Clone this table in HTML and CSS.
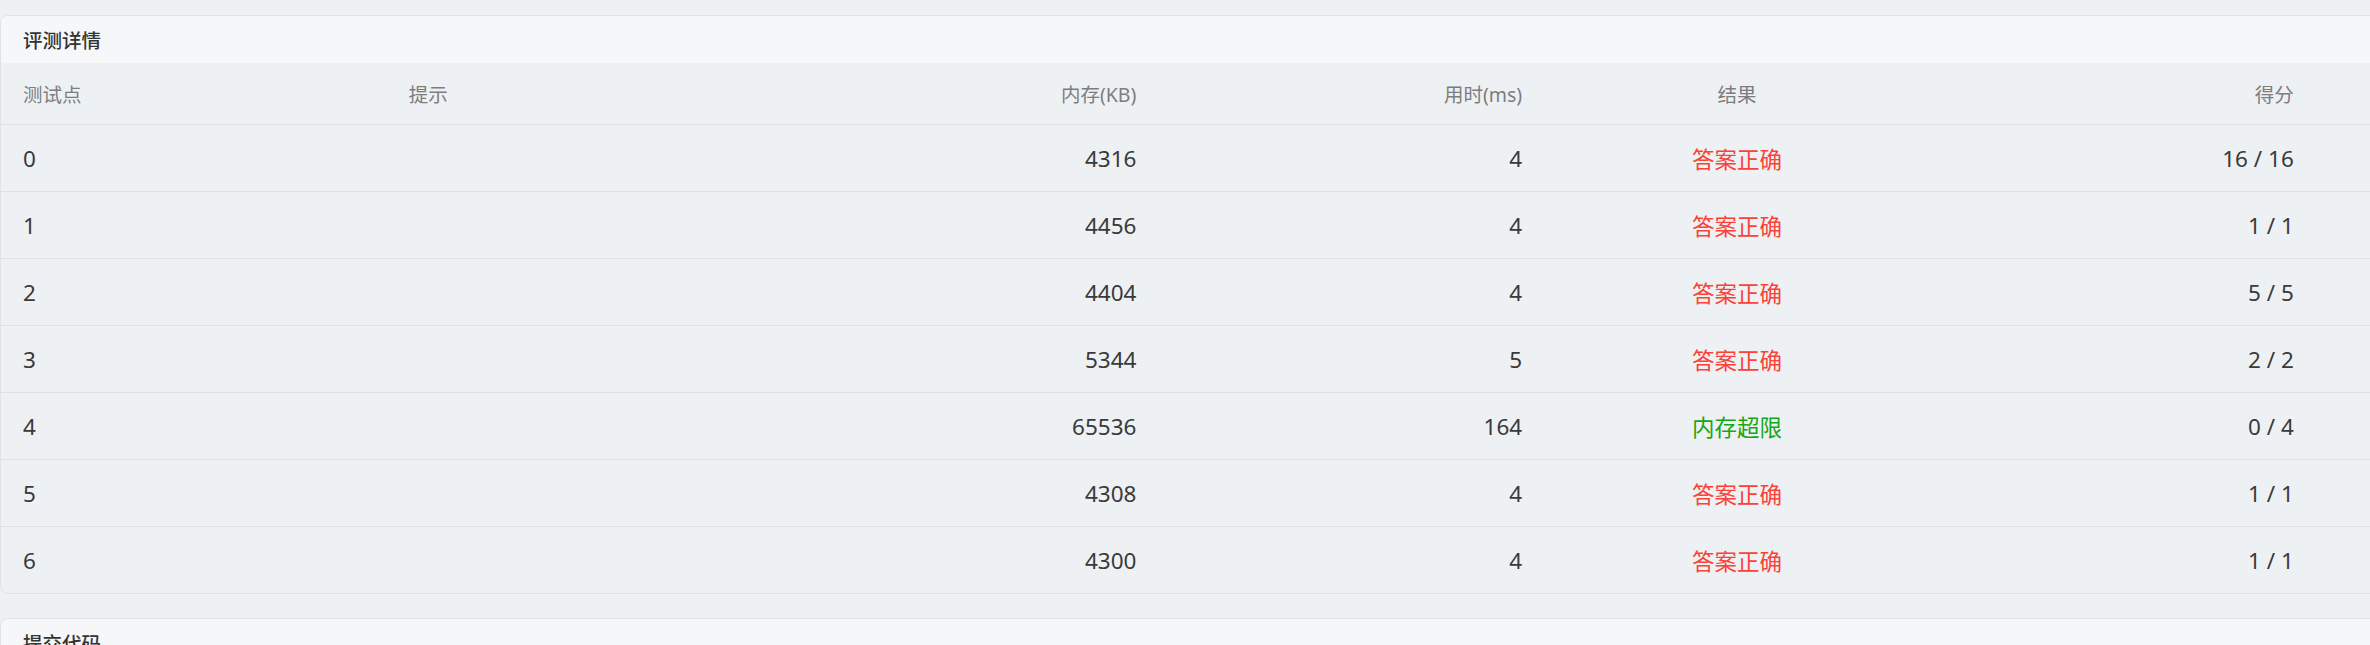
FILE: index.html
```html
<!DOCTYPE html>
<html lang="zh-CN">
<head>
<meta charset="utf-8">
<title>评测详情</title>
<link rel="stylesheet" href="styles.css">
</head>
<body>
<div class="page">
  <section class="card">
    <div class="card-title">评测详情</div>
    <div class="table">
      <div class="row head">
        <div class="cell left">测试点</div>
        <div class="cell left">提示</div>
        <div class="cell right">内存(KB)</div>
        <div class="cell right">用时(ms)</div>
        <div class="cell center">结果</div>
        <div class="cell right">得分</div>
      </div>
      <div class="row">
        <div class="cell left">0</div><div class="cell left"></div>
        <div class="cell right">4316</div><div class="cell right">4</div>
        <div class="cell center ac">答案正确</div><div class="cell right">16 / 16</div>
      </div>
      <div class="row">
        <div class="cell left">1</div><div class="cell left"></div>
        <div class="cell right">4456</div><div class="cell right">4</div>
        <div class="cell center ac">答案正确</div><div class="cell right">1 / 1</div>
      </div>
      <div class="row">
        <div class="cell left">2</div><div class="cell left"></div>
        <div class="cell right">4404</div><div class="cell right">4</div>
        <div class="cell center ac">答案正确</div><div class="cell right">5 / 5</div>
      </div>
      <div class="row">
        <div class="cell left">3</div><div class="cell left"></div>
        <div class="cell right">5344</div><div class="cell right">5</div>
        <div class="cell center ac">答案正确</div><div class="cell right">2 / 2</div>
      </div>
      <div class="row">
        <div class="cell left">4</div><div class="cell left"></div>
        <div class="cell right">65536</div><div class="cell right">164</div>
        <div class="cell center mle">内存超限</div><div class="cell right">0 / 4</div>
      </div>
      <div class="row">
        <div class="cell left">5</div><div class="cell left"></div>
        <div class="cell right">4308</div><div class="cell right">4</div>
        <div class="cell center ac">答案正确</div><div class="cell right">1 / 1</div>
      </div>
      <div class="row last">
        <div class="cell left">6</div><div class="cell left"></div>
        <div class="cell right">4300</div><div class="cell right">4</div>
        <div class="cell center ac">答案正确</div><div class="cell right">1 / 1</div>
      </div>
    </div>
  </section>
  <section class="card">
    <div class="card-title">提交代码</div>
  </section>
</div>
</body>
</html>
```

FILE: styles.css
```css
html, body {
  margin: 0;
  padding: 0;
  background: #eef1f4;
  overflow: hidden;
}

body {
  font-family: "Noto Sans", "Noto Sans CJK SC", sans-serif;
  color: #3a3a3a;
}

.page {
  padding-top: 15px;
  width: 2400px;
}

.card {
  border: 1px solid #dfe3e8;
  border-radius: 8px;
  background: #eef1f4;
  margin-bottom: 24px;
  overflow: hidden;
}

.card-title {
  height: 44px;
  padding: 3px 22px 0;
  line-height: 44px;
  font-size: 19.5px;
  font-weight: 500;
  color: #333;
  background: #f5f7f9;
}

.row {
  display: grid;
  grid-template-columns: repeat(6, 385.8px);
  height: 66px;
  align-items: center;
  border-bottom: 1px solid #dde2e7;
  font-size: 22.5px;
}

.row.last {
  border-bottom: none;
}

.row.head {
  height: 61px;
  font-size: 19.5px;
  color: #7d7d7d;
}

.cell {
  padding: 0 22px;
  white-space: nowrap;
}

.left { text-align: left; }
.right { text-align: right; }
.center { text-align: center; }

.ac { color: #fa4238; }
.mle { color: #16a616; }
```
